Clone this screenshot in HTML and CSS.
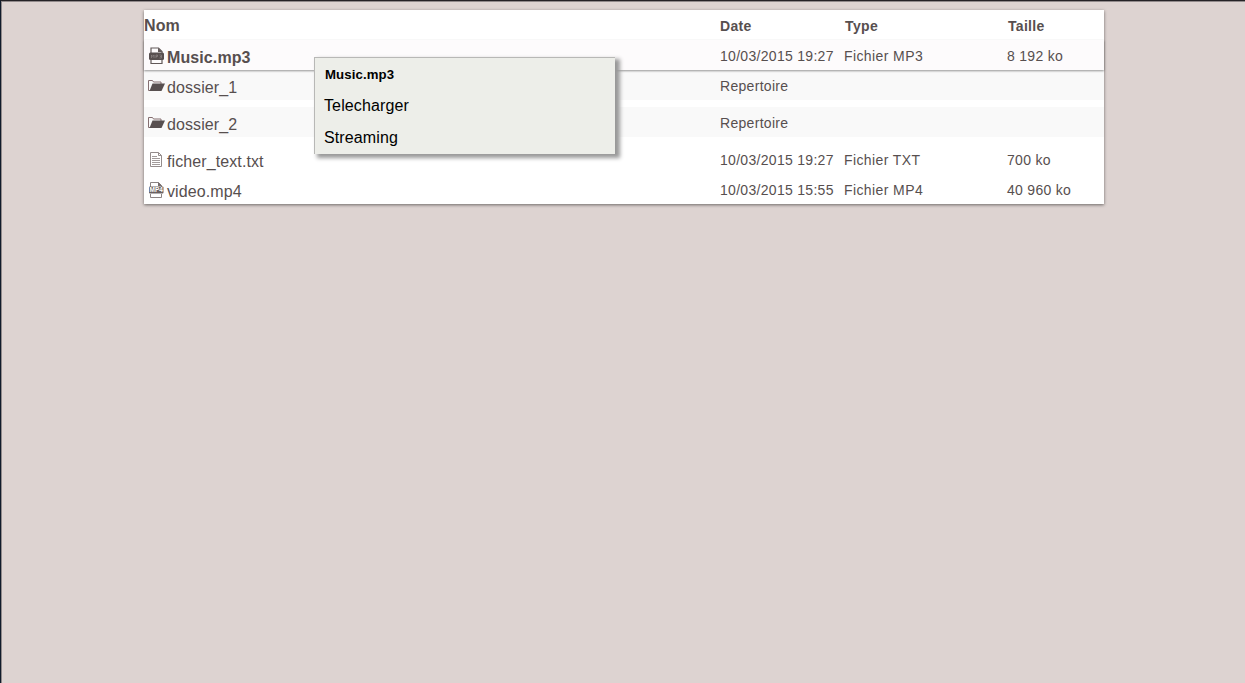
FILE: index.html
```html
<!DOCTYPE html>
<html lang="fr">
<head>
<meta charset="utf-8">
<title>Fichiers</title>
<link rel="stylesheet" href="styles.css">
</head>
<body>
<main class="files">
  <div class="row head"><span class="name">Nom</span><span class="date">Date</span><span class="type">Type</span><span class="size">Taille</span></div>
  <div class="row selected">
    <span class="name"><svg class="icon" viewBox="0 0 18 18"><path d="M3 6V1H10.5L14 4.500V6M3 12.500V16.500H14V12.500" fill="none" stroke="#625959" stroke-width="1.2"/><path d="M10 1v4h4.500z" fill="#625959"/><rect x="1" y="5.500" width="15" height="7.500" rx="1.500" fill="#574f4f"/><path d="M3.500 11V8l1.300 1.500L6 8v3M8 11V8h1.500v1.500H8M11.500 8h2v3h-2m.5-1.500h1.500" fill="none" stroke="#8f8787" stroke-width=".7"/></svg><span>Music.mp3</span></span>
    <span class="date">10/03/2015 19:27</span><span class="type">Fichier MP3</span><span class="size">8 192 ko</span>
  </div>
  <div class="row folder">
    <span class="name"><svg class="icon" viewBox="0 0 18 18"><path d="M2 13.500H.5v-10h4l1 1.500h7.500v2" fill="none" stroke="#856f71"/><path d="M4.500 6.500H17L13.500 14H1.500z" fill="#574f4f"/></svg><span>dossier_1</span></span>
    <span class="date">Repertoire</span>
  </div>
  <div class="row folder">
    <span class="name"><svg class="icon" viewBox="0 0 18 18"><path d="M2 13.500H.5v-10h4l1 1.500h7.500v2" fill="none" stroke="#856f71"/><path d="M4.500 6.500H17L13.500 14H1.500z" fill="#574f4f"/></svg><span>dossier_2</span></span>
    <span class="date">Repertoire</span>
  </div>
  <div class="row">
    <span class="name"><svg class="icon" viewBox="0 0 18 18"><path d="M2.500 1.500h8l3 3v11h-11zM10.500 1.500v3h3" fill="none" stroke="#948c8c"/><path d="M4 5.500h5M4 7.500h8M4 9.500h8M4 11.500h8M4 13.500h8" stroke="#a29b9b"/></svg><span>ficher_text.txt</span></span>
    <span class="date">10/03/2015 19:27</span><span class="type">Fichier TXT</span><span class="size">700 ko</span>
  </div>
  <div class="row">
    <span class="name"><svg class="icon" viewBox="0 0 18 18"><path d="M2.500 6V1.500h8l3 3V6M2.500 13v3.500h11V13" fill="none" stroke="#8b8383"/><path d="M10 1v4h4z" fill="#756c6c"/><rect x="1" y="5.500" width="14.500" height="7" rx="1" fill="#6b6262"/><text x="8.200" y="11.300" class="badge">MP4</text></svg><span>video.mp4</span></span>
    <span class="date">10/03/2015 15:55</span><span class="type">Fichier MP4</span><span class="size">40 960 ko</span>
  </div>
</main>
<div class="menu">
  <div class="menu-title">Music.mp3</div>
  <div class="menu-item">Telecharger</div>
  <div class="menu-item">Streaming</div>
</div>
<div class="frame"></div>
</body>
</html>
```
FILE: styles.css
```css
* { box-sizing: border-box; }
body {
  margin: 0;
  min-height: 683px;
  padding: 10px 141px 0 144px;
  background: #ddd3d1;
  color: #574f4f;
  font-family: "Liberation Sans", Arial, sans-serif;
  font-size: 16px;
}
.frame {
  position: absolute;
  inset: 0;
  border-top: 1px solid #252226;
  border-left: 1px solid #101b2b;
  box-shadow: inset 1px 1px 0 #918a8b;
  pointer-events: none;
}
.files {
  width: 960px;
  background: #fff;
  box-shadow: 0 1px 3px rgba(0, 0, 0, .5);
}
.row {
  display: grid;
  grid-template-columns: 576px 124px 163px 97px;
  height: 30px;
  line-height: 32px;
  white-space: nowrap;
}
.name { display: flex; padding-left: 4px; line-height: 36px; letter-spacing: .1px; }
.icon { width: 18px; height: 18px; margin: 7px 1px 0 0; }
.badge {
  fill: #fff;
  font-size: 6.5px;
  font-weight: bold;
  letter-spacing: 0;
  text-anchor: middle;
}
.date, .type, .size { font-size: 14px; letter-spacing: .3px; }
.type { letter-spacing: .4px; }
.head { font-weight: bold; }
.head .name { padding: 0; line-height: 31px; }
.head .type, .head .size { padding-left: 1px; }
.selected {
  position: relative;
  background: #fdfbfc;
  box-shadow: 0 1px 2px rgba(0, 0, 0, .4);
}
.selected .name { font-weight: bold; }
.folder { margin-bottom: 7px; background: #f9f9f9; }
.menu {
  position: absolute;
  left: 314px;
  top: 57px;
  width: 301px;
  height: 97px;
  padding: 1px 9px;
  border: solid #b8b8b6;
  border-width: 1px 0 0 1px;
  background: #edeee9;
  box-shadow: 4px 3px 4px 1px #999;
  color: #000;
  letter-spacing: .12px;
}
.menu-title { height: 31px; padding-left: 1px; font-size: 13.2px; font-weight: bold; line-height: 31px; }
.menu-item { height: 32px; line-height: 32px; }
```
